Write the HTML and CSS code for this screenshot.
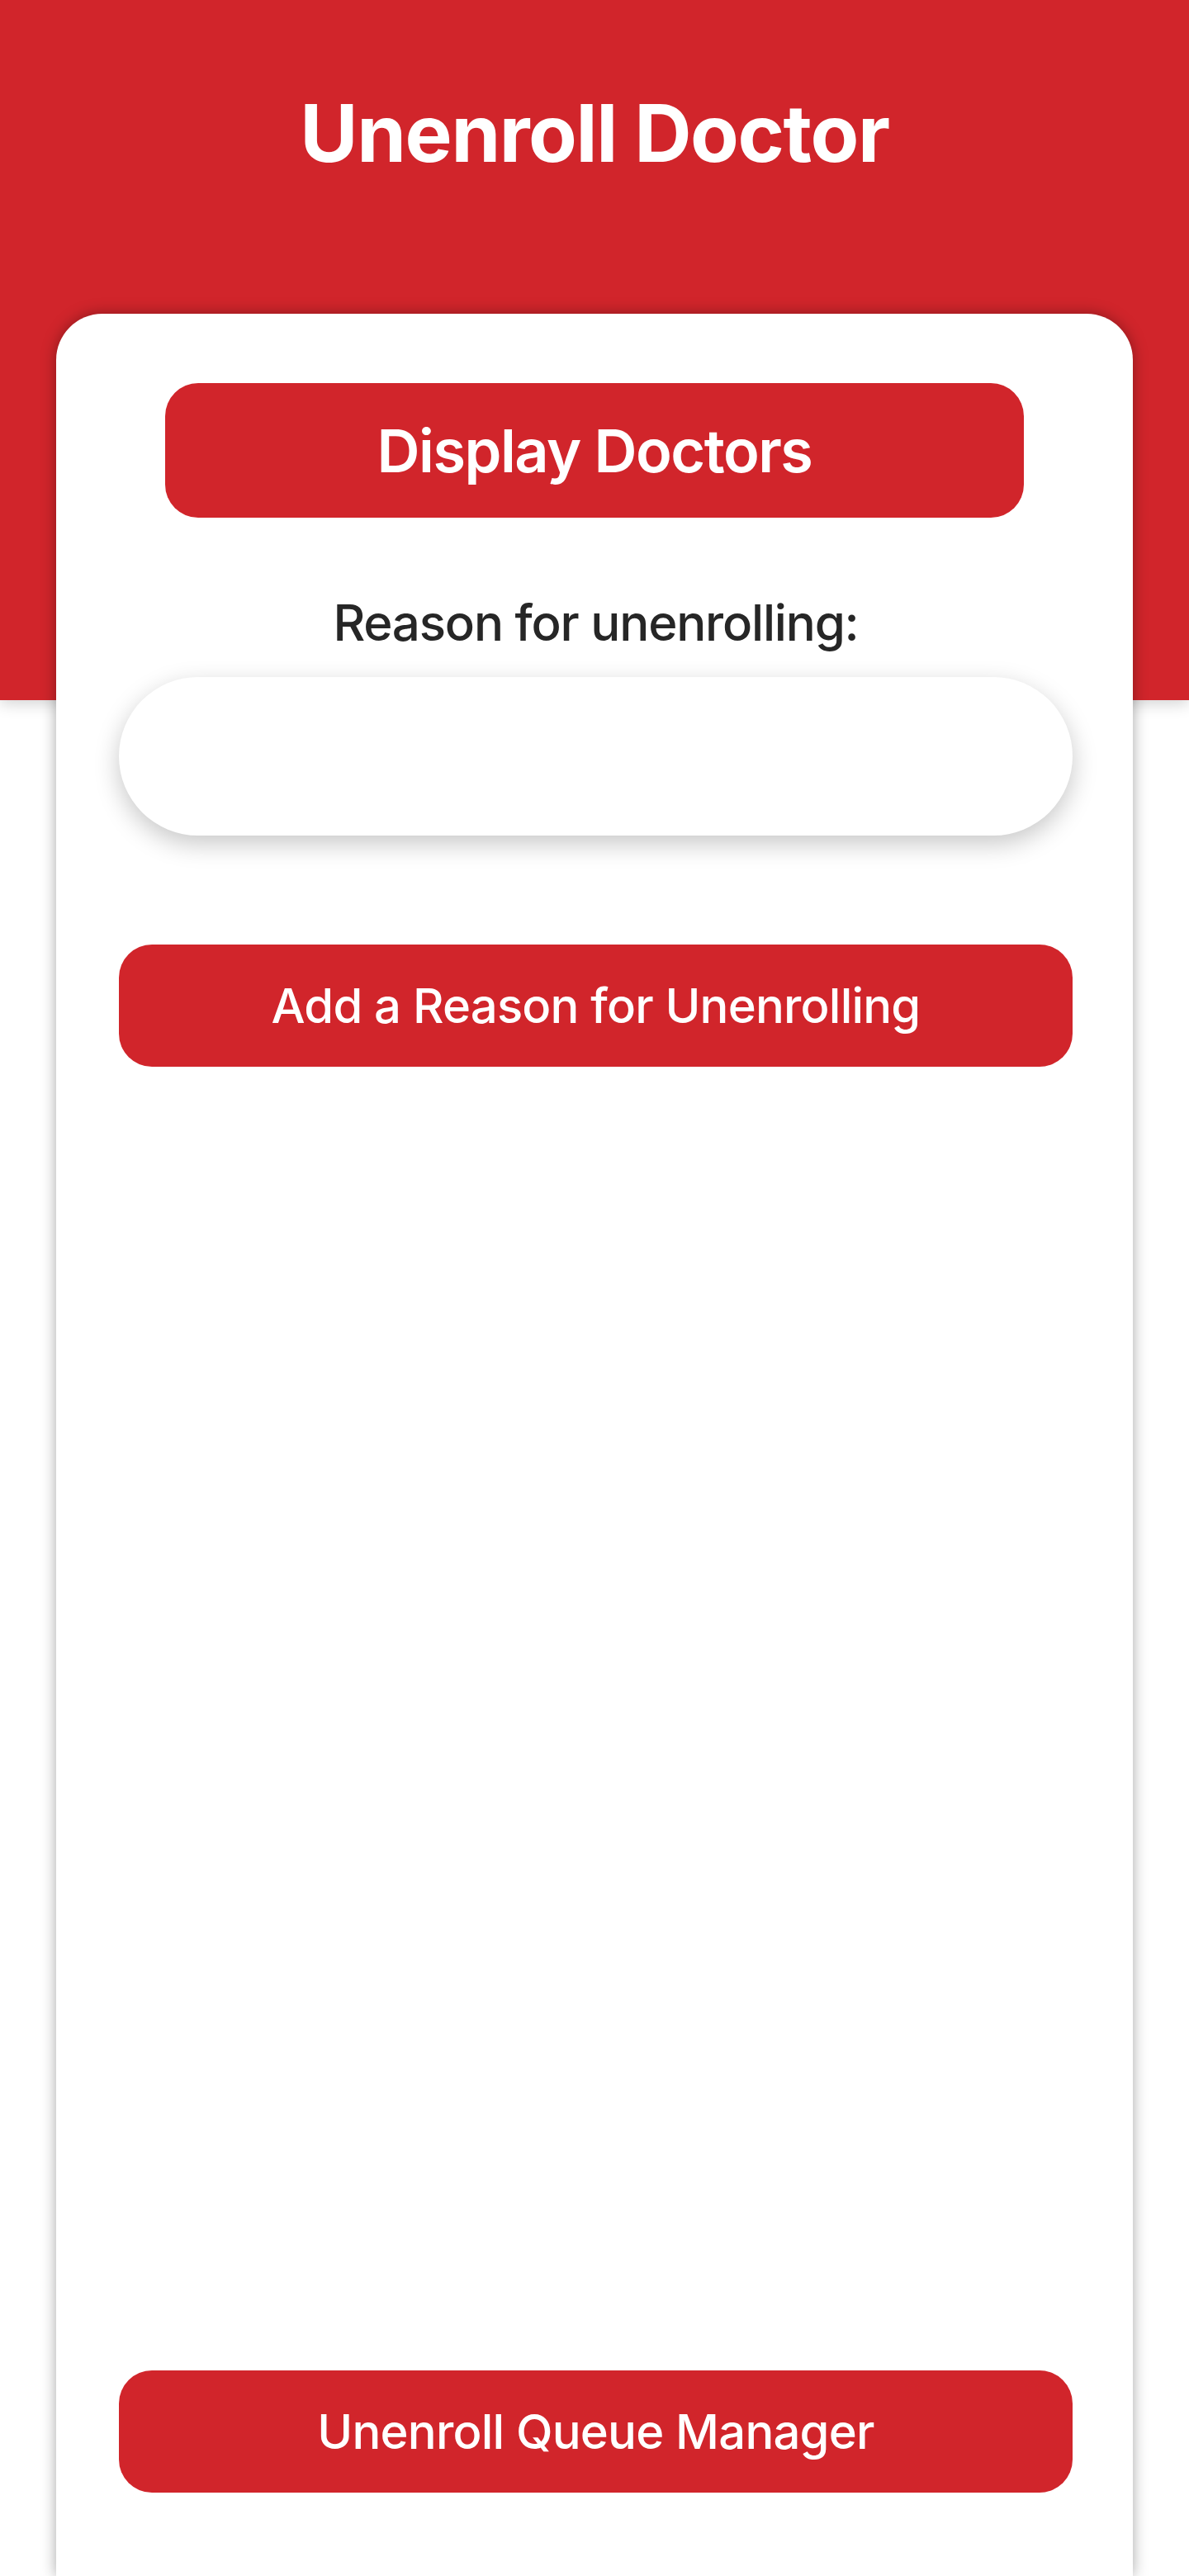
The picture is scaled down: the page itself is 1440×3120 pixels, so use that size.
FILE: index.html
```html
<!DOCTYPE html>
<html lang="en">
<head>
  <meta charset="UTF-8">
  <meta name="viewport" content="width=device-width, initial-scale=1.0">
  <title>Unenroll Doctor</title>
  <link rel="stylesheet" href="styles.css">
</head>
<body>
  <header class="header">
    <h1 class="title">Unenroll Doctor</h1>
  </header>

  <main class="card">
    <button class="button display-button">Display Doctors</button>

    <label class="reason-label" for="reason">Reason for unenrolling:</label>
    <input class="reason-input" id="reason" type="text">

    <button class="button action-button">Add a Reason for Unenrolling</button>

    <button class="button action-button queue-button">Unenroll Queue Manager</button>
  </main>
</body>
</html>
```

FILE: styles.css
```css
body {
  font-family: 'Inter', 'Liberation Sans', sans-serif;
  background-color: #ffffff;
  color: #262626;
  margin: 0;
  padding: 0;
  overflow: hidden;
}

.header {
  height: 848px;
  box-sizing: border-box;
  padding-top: 113px;
  background-color: #d1252b;
  box-shadow: 0 4px 18px rgba(0, 0, 0, 0.18);
  text-align: center;
}

.title {
  margin: 0;
  font-size: 96px;
  line-height: 1;
  font-weight: 700;
  color: #ffffff;
  letter-spacing: -1.4px;
}

.card {
  position: relative;
  margin: -468px 68px 0;
  height: 2740px;
  box-sizing: border-box;
  padding: 84px 73px 101px 76px;
  background-color: #ffffff;
  border-radius: 56px 56px 0 0;
  box-shadow: 0 0 18px rgba(0, 0, 0, 0.35);
  display: flex;
  flex-direction: column;
}

.button {
  font-family: inherit;
  background-color: #d1252b;
  color: #ffffff;
  border: none;
  cursor: pointer;
  padding: 0;
}

.display-button {
  margin: 0 59px 0 56px;
  height: 163px;
  border-radius: 40px;
  font-size: 72px;
  font-weight: 600;
  letter-spacing: -1.5px;
}

.reason-label {
  margin-top: 91px;
  font-size: 60px;
  line-height: 72px;
  font-weight: 500;
  text-align: center;
  letter-spacing: -1.2px;
}

.reason-input {
  margin-top: 30px;
  height: 192px;
  border: none;
  border-radius: 96px;
  background-color: #ffffff;
  box-shadow: 0 10px 30px rgba(0, 0, 0, 0.22);
  font-family: inherit;
  font-size: 56px;
  padding: 0 60px;
  outline: none;
}

.action-button {
  margin-top: 132px;
  height: 148px;
  border-radius: 40px;
  font-size: 58px;
  font-weight: 500;
  letter-spacing: -0.8px;
}

.queue-button {
  margin-top: auto;
}
```
